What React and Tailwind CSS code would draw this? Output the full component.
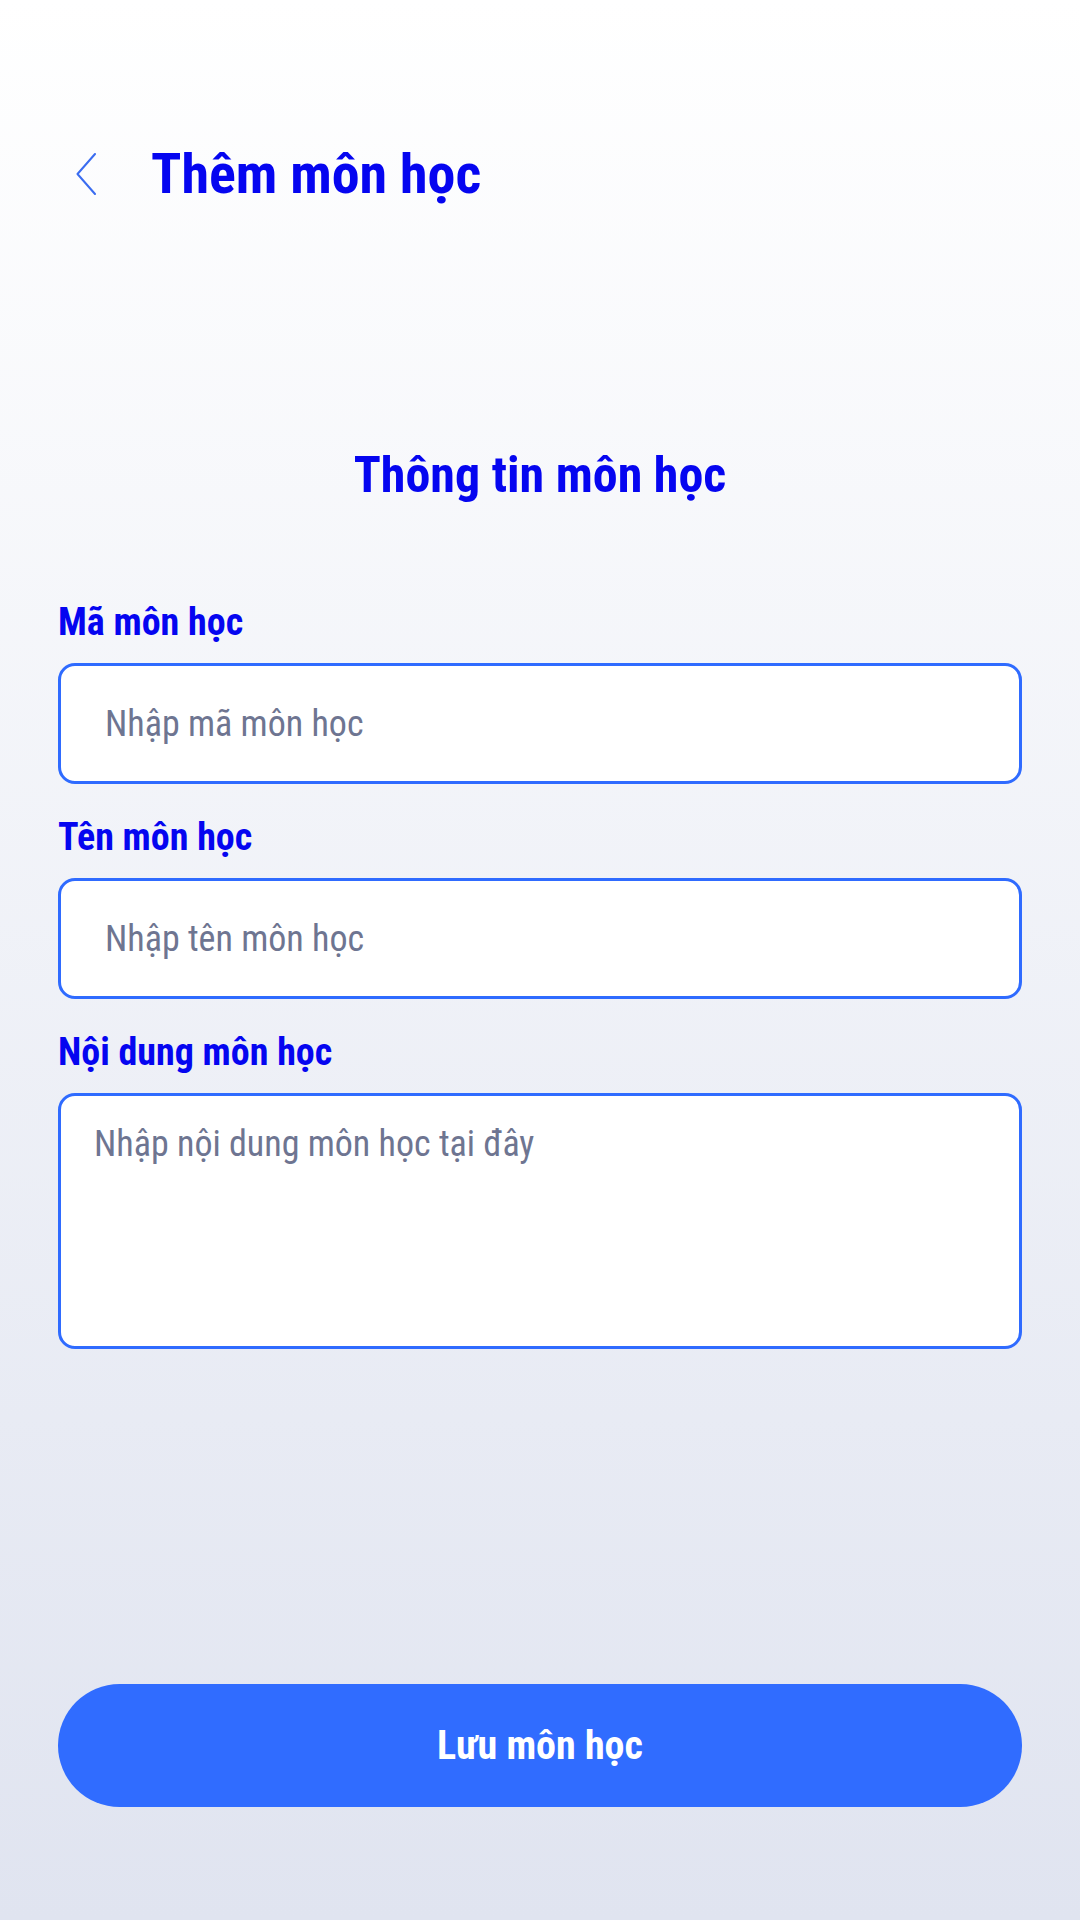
import React from "react";

const F = "[font-family:'Roboto_Condensed',Roboto,sans-serif] [font-stretch:condensed]";

function Label({ children }) {
  return (
    <div className={`${F} text-[38px] leading-[38px] font-bold text-[#0505f0]`}>{children}</div>
  );
}

export default function App() {
  return (
    <div className={`${F} min-h-[1920px] w-[1080px] bg-gradient-to-b from-white to-[#e0e4f0] px-[58px] pt-[145px]`}>
      <div className="flex h-[58px] items-center">
        <svg className="ml-[18px] shrink-0" width="20" height="42" viewBox="0 0 20 42" fill="none">
          <path d="M19 1 L1.5 21 L19 41" stroke="#3a6cf0" strokeWidth="2" strokeLinecap="round" strokeLinejoin="round" />
        </svg>
        <h1 className={`${F} ml-[55px] text-[56px] leading-[58px] font-bold text-[#0505f0]`}>Thêm môn học</h1>
      </div>

      <h2 className={`${F} mt-[246px] text-center text-[50px] leading-[52px] font-bold text-[#0505f0]`}>
        Thông tin môn học
      </h2>

      <div className="mt-[102px] flex flex-col">
        <Label>Mã môn học</Label>
        <input
          className={`${F} mt-[22px] h-[121px] w-full rounded-[17px] border-[3px] border-[#2f6bff] bg-white pl-[44px] text-[36px] outline-none placeholder:text-[#6e7591]`}
          placeholder="Nhập mã môn học"
        />
        <div className="mt-[34px]">
          <Label>Tên môn học</Label>
        </div>
        <input
          className={`${F} mt-[22px] h-[121px] w-full rounded-[17px] border-[3px] border-[#2f6bff] bg-white pl-[44px] text-[36px] outline-none placeholder:text-[#6e7591]`}
          placeholder="Nhập tên môn học"
        />
        <div className="mt-[34px]">
          <Label>Nội dung môn học</Label>
        </div>
        <textarea
          className={`${F} mt-[22px] block h-[256px] w-full resize-none rounded-[17px] border-[3px] border-[#2f6bff] bg-white pl-[33px] pt-[28px] text-[36px] leading-[40px] outline-none placeholder:text-[#6e7591]`}
          placeholder="Nhập nội dung môn học tại đây"
        />
      </div>

      <button className={`${F} mt-[335px] flex h-[123px] w-full items-center justify-center rounded-full bg-[#306cff] text-[40px] font-bold text-white`}>
        Lưu môn học
      </button>
    </div>
  );
}
